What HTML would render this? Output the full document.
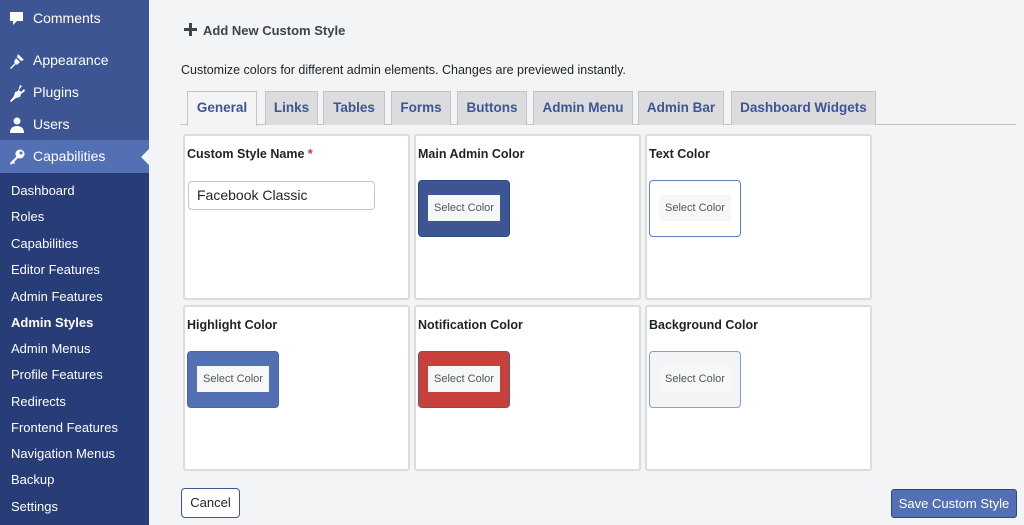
<!DOCTYPE html>
<html><head><meta charset="utf-8"><style>
*{box-sizing:border-box;margin:0;padding:0}
body{width:1024px;height:525px;overflow:hidden;background:#f3f4f5;font-family:"Liberation Sans",Arial,sans-serif;position:relative;color:#1d2327}
#sb{position:absolute;left:0;top:0;width:149px;height:525px;background:#3e5593}
.mi{position:absolute;left:0;width:149px;height:33px;color:#fff;font-size:14px;line-height:33px;padding-left:33px}
.mi svg{position:absolute;left:8px;top:8px}
#cap{background:#5470b5;top:140px}
#cap:after{content:"";position:absolute;right:0;top:9px;border:8px solid transparent;border-right-color:#f3f4f5;border-left:0}
#sub{position:absolute;top:173px;left:0;width:149px;height:352px;background:#283c78}
.si{position:absolute;left:11px;color:#fff;font-size:13px;line-height:16px}
.abs{position:absolute}
.tab{position:absolute;top:91px;height:34px;background:#dcdcde;border:1px solid #c3c4c7;border-bottom:none;color:#3e5593;font-weight:bold;font-size:13.5px;line-height:32px;text-align:center}
.card{position:absolute;width:227px;height:166px;background:#fff;border:2px solid #dcdcde;border-radius:3px}
.card h4{position:absolute;left:2px;top:11px;font-size:12.5px;font-weight:bold;color:#1d2327}
.sw{position:absolute;left:2px;top:44px;width:92px;height:57px;border-radius:4px;border:1px solid #2c4a80}
.sw span{position:absolute;left:9px;top:14px;width:72px;height:26px;background:#f6f7f7;font-size:11px;color:#50575e;text-align:center;line-height:26px}
</style></head><body>
<div id="sb">
<div class="mi" style="top:2px"><svg width="18" height="18" viewBox="0 0 18 18"><path d="M2 2h13v9H9l-4 4v-4H2z" fill="#fff"/></svg>Comments</div>
<div class="mi" style="top:44px"><svg width="18" height="18" viewBox="0 0 18 18"><path d="M10 2l6 6-3 1-4-4zM8 6l4 4-3 3-1-1-5 5-1-1 5-5-1-1z" fill="#fff"/></svg>Appearance</div>
<div class="mi" style="top:76px"><svg width="18" height="18" viewBox="0 0 18 18"><path d="M12 1l2 1-3 4 2 2 3-3 1 2-4 3-1 3-4 1-5 4-1-1 4-5 1-4 3-1z" fill="#fff"/></svg>Plugins</div>
<div class="mi" style="top:108px"><svg width="18" height="18" viewBox="0 0 18 18"><circle cx="9" cy="5" r="3.5" fill="#fff"/><path d="M2 17c0-5 3-7 7-7s7 2 7 7z" fill="#fff"/></svg>Users</div>
<div class="mi" id="cap"><svg width="18" height="18" viewBox="0 0 18 18"><circle cx="12" cy="6" r="4.5" fill="#fff"/><circle cx="13" cy="5" r="1.5" fill="#5470b5"/><path d="M9 8l-7 7 1 2 2-2 1 1 1-1-1-1 4-4z" fill="#fff"/></svg>Capabilities</div>
<div id="sub">
<div class="si" style="top:10px">Dashboard</div>
<div class="si" style="top:36px">Roles</div>
<div class="si" style="top:63px">Capabilities</div>
<div class="si" style="top:89px">Editor Features</div>
<div class="si" style="top:116px">Admin Features</div>
<div class="si" style="top:142px;font-weight:bold">Admin Styles</div>
<div class="si" style="top:168px">Admin Menus</div>
<div class="si" style="top:194px">Profile Features</div>
<div class="si" style="top:221px">Redirects</div>
<div class="si" style="top:247px">Frontend Features</div>
<div class="si" style="top:273px">Navigation Menus</div>
<div class="si" style="top:299px">Backup</div>
<div class="si" style="top:326px">Settings</div>
</div>
</div>
<svg class="abs" style="left:184px;top:23px" width="13" height="13" viewBox="0 0 13 13"><path d="M5 0h3v5h5v3H8v5H5V8H0V5h5z" fill="#3c434a"/></svg>
<div class="abs" style="left:203px;top:23px;font-size:13px;font-weight:bold;color:#3c434a">Add New Custom Style</div>
<div class="abs" style="left:181px;top:63px;font-size:12.5px;color:#1d2327">Customize colors for different admin elements. Changes are previewed instantly.</div>
<div class="abs" style="left:180px;top:124px;width:836px;height:1px;background:#c3c4c7"></div>
<div class="tab" style="left:187px;width:70px;background:#f3f4f5;height:35px">General</div>
<div class="tab" style="left:265px;width:53px">Links</div>
<div class="tab" style="left:323px;width:62px">Tables</div>
<div class="tab" style="left:391px;width:60px">Forms</div>
<div class="tab" style="left:457px;width:70px">Buttons</div>
<div class="tab" style="left:533px;width:100px">Admin Menu</div>
<div class="tab" style="left:638px;width:86px">Admin Bar</div>
<div class="tab" style="left:731px;width:145px">Dashboard Widgets</div>

<div class="card" style="left:183px;top:134px"><h4>Custom Style Name <span style="color:#d63638">*</span></h4>
<div class="abs" style="left:3px;top:45px;width:187px;height:29px;border:1px solid #c3c4c7;border-radius:4px;font-size:14px;line-height:27px;padding-left:8px">Facebook Classic</div></div>
<div class="card" style="left:414px;top:134px"><h4>Main Admin Color</h4><div class="sw" style="background:#3e5593"><span>Select Color</span></div></div>
<div class="card" style="left:645px;top:134px"><h4>Text Color</h4><div class="sw" style="background:#fff;border-color:#5a82c0"><span>Select Color</span></div></div>
<div class="card" style="left:183px;top:305px"><h4>Highlight Color</h4><div class="sw" style="background:#5470b5;border-color:#4a66a8"><span>Select Color</span></div></div>
<div class="card" style="left:414px;top:305px"><h4>Notification Color</h4><div class="sw" style="background:#c8403a;border-color:#5a5a7a"><span>Select Color</span></div></div>
<div class="card" style="left:645px;top:305px"><h4>Background Color</h4><div class="sw" style="background:#f3f4f5;border-color:#7aa0d6"><span>Select Color</span></div></div>

<div class="abs" style="left:181px;top:488px;width:59px;height:30px;border:1px solid #3e5593;border-radius:4px;background:#fff;font-size:13px;text-align:center;line-height:28px">Cancel</div>
<div class="abs" style="left:891px;top:489px;width:126px;height:29px;border:1px solid #2c4a80;border-radius:3px;background:#5470b5;color:#fff;font-size:13px;text-align:center;line-height:27px">Save Custom Style</div>
</body></html>
